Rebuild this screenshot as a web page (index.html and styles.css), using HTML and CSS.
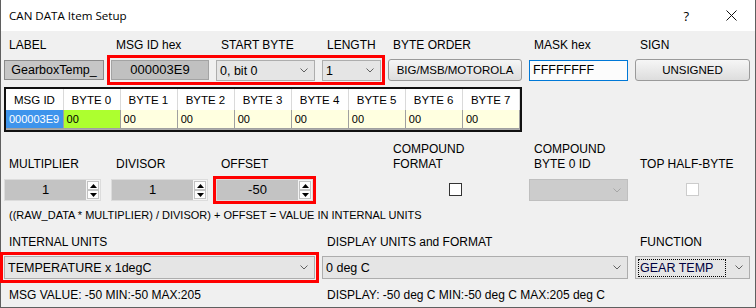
FILE: index.html
```html
<!DOCTYPE html>
<html lang="en">
<head>
  <meta charset="UTF-8">
  <meta name="viewport" content="width=device-width, initial-scale=1">
  <title>CAN DATA Item Setup</title>
  <link rel="stylesheet" href="styles.css">
</head>
<body>

<div class="dialog">
  <div class="titlebar">
    <span class="title">CAN DATA Item Setup</span>
    <span class="help">?</span>
    <svg class="close" width="11" height="11" viewBox="0 0 11 11"><path d="M.5 .5 10.5 10.5M10.5 .5 .5 10.5"/></svg>
  </div>

  <div class="form">
    <!-- row 1 -->
    <div class="cap">LABEL</div>
    <div class="cap">MSG ID hex</div>
    <div class="cap">START BYTE</div>
    <div class="cap">LENGTH</div>
    <div class="cap">BYTE ORDER</div>
    <div class="cap">MASK hex</div>
    <div class="cap">SIGN</div>

    <div class="field field-label">GearboxTemp_</div>
    <div class="group span-3 mark">
      <div class="field field-id">000003E9</div>
      <div class="combo combo-start">
        <span>0, bit 0</span>
        <svg class="chev" width="8" height="5" viewBox="0 0 8 5"><path d="M.5 .5 4 4 7.5 .5"/></svg>
      </div>
      <div class="combo combo-len">
        <span>1</span>
        <svg class="chev" width="8" height="5" viewBox="0 0 8 5"><path d="M.5 .5 4 4 7.5 .5"/></svg>
      </div>
    </div>
    <button class="btn">BIG/MSB/MOTOROLA</button>
    <div class="field field-mask">FFFFFFFF</div>
    <button class="btn">UNSIGNED</button>

    <!-- data bytes -->
    <div class="grid-view">
      <table>
        <tr>
          <th>MSG ID</th><th>BYTE 0</th><th>BYTE 1</th><th>BYTE 2</th><th>BYTE 3</th>
          <th>BYTE 4</th><th>BYTE 5</th><th>BYTE 6</th><th>BYTE 7</th>
        </tr>
        <tr>
          <td class="sel">000003E9</td><td class="hit">00</td><td>00</td><td>00</td><td>00</td>
          <td>00</td><td>00</td><td>00</td><td>00</td>
        </tr>
      </table>
    </div>

    <!-- row 2 -->
    <div class="cap cap-low">MULTIPLIER</div>
    <div class="cap cap-low">DIVISOR</div>
    <div class="cap cap-low">OFFSET</div>
    <div class="cap cap-low col-5">COMPOUND<br>FORMAT</div>
    <div class="cap cap-low">COMPOUND<br>BYTE 0 ID</div>
    <div class="cap cap-low">TOP HALF-BYTE</div>

    <div class="spin">
      <span class="spin-value">1</span>
      <span class="spin-buttons">
        <span><svg width="7" height="4" viewBox="0 0 7 4"><path d="M0 4 3.5 0 7 4z"/></svg></span>
        <span><svg width="7" height="4" viewBox="0 0 7 4"><path d="M0 0 3.5 4 7 0z"/></svg></span>
      </span>
    </div>
    <div class="spin">
      <span class="spin-value">1</span>
      <span class="spin-buttons">
        <span><svg width="7" height="4" viewBox="0 0 7 4"><path d="M0 4 3.5 0 7 4z"/></svg></span>
        <span><svg width="7" height="4" viewBox="0 0 7 4"><path d="M0 0 3.5 4 7 0z"/></svg></span>
      </span>
    </div>
    <div class="spin mark-tight">
      <span class="spin-value">-50</span>
      <span class="spin-buttons">
        <span><svg width="7" height="4" viewBox="0 0 7 4"><path d="M0 4 3.5 0 7 4z"/></svg></span>
        <span><svg width="7" height="4" viewBox="0 0 7 4"><path d="M0 0 3.5 4 7 0z"/></svg></span>
      </span>
    </div>
    <div class="check col-5"></div>
    <div class="combo disabled">
      <span></span>
      <svg class="chev" width="8" height="5" viewBox="0 0 8 5"><path d="M.5 .5 4 4 7.5 .5"/></svg>
    </div>
    <div class="check off"></div>

    <div class="note formula wide">((RAW_DATA * MULTIPLIER) / DIVISOR) + OFFSET = VALUE IN INTERNAL UNITS</div>

    <!-- row 3 -->
    <div class="cap cap-mid span-3">INTERNAL UNITS</div>
    <div class="cap cap-mid span-3">DISPLAY UNITS and FORMAT</div>
    <div class="cap cap-mid">FUNCTION</div>

    <div class="combo combo-wide span-3 mark">
      <span>TEMPERATURE x 1degC</span>
      <svg class="chev" width="8" height="5" viewBox="0 0 8 5"><path d="M.5 .5 4 4 7.5 .5"/></svg>
    </div>
    <div class="combo combo-wide span-3">
      <span>0 deg C</span>
      <svg class="chev" width="8" height="5" viewBox="0 0 8 5"><path d="M.5 .5 4 4 7.5 .5"/></svg>
    </div>
    <div class="combo combo-wide">
      <span class="focus">GEAR TEMP</span>
      <svg class="chev" width="8" height="5" viewBox="0 0 8 5"><path d="M.5 .5 4 4 7.5 .5"/></svg>
    </div>

    <div class="note span-3">MSG VALUE: -50 MIN:-50 MAX:205</div>
    <div class="note span-4">DISPLAY: -50 deg C MIN:-50 deg C MAX:205 deg C</div>
  </div>
</div>

</body>
</html>
```

FILE: styles.css
```css
*, *:after, *:before {
  box-sizing: border-box;
}
html, body {
  margin: 0;
  padding: 0;
}
body {
  background: #FFF;
  color: #000;
  font-family: "Liberation Sans", Arial, sans-serif;
  font-size: 12px;
}
.dialog {
  width: 756px;
  height: 308px;
  border: 1px solid #5F5F5F;
  border-top: 0;
  background: #F0F0F0;
}

/* title bar */
.titlebar {
  height: 31px;
  background: #FFF;
  display: flex;
  align-items: center;
  padding: 0 0 0 8px;
}
.title {
  font-family: "Open Sans", "Noto Sans", sans-serif;
  font-size: 11.6px;
  flex: 1;
}
.help {
  font-family: "Open Sans", "Noto Sans", sans-serif;
  font-size: 13px;
  margin-right: 37px;
}
.close {
  margin-right: 18px;
}
.close path {
  stroke: #111;
  stroke-width: 1;
  fill: none;
}

/* main layout */
.form {
  display: grid;
  grid-template-columns: 100px 98px 99px 59px 134px 99px 115px;
  grid-template-rows: 21px 23px 55px 42px 24px 26px 27px 28px 23px;
  column-gap: 7px;
  padding: 7px 3px 0;
}
.cap {
  padding-left: 5px;
  line-height: 14px;
  white-space: nowrap;
}
.cap-low {
  align-self: end;
  line-height: 15px;
  margin-bottom: 7px;
}
.cap-mid {
  margin-top: 6px;
}
.col-5 {
  grid-column-start: 5;
}
.span-3 {
  grid-column: span 3;
}
.span-4 {
  grid-column: span 4;
}
.wide {
  grid-column: 1 / -1;
}
.note {
  line-height: 14px;
  padding-left: 5px;
  margin-top: 4px;
  white-space: nowrap;
}
.formula {
  margin-top: 5px;
  font-size: 11px;
}

/* red highlight frames */
.mark {
  outline: 3px solid #F00;
  outline-offset: 1px;
}
.mark-tight {
  outline: 3px solid #F00;
}

/* inputs */
.field {
  height: 20px;
  margin-top: 1px;
  line-height: 18px;
  border: 1px solid #8A8A8A;
  background: #C6C6C6;
  text-align: center;
  white-space: nowrap;
}
.field-label {
  font-size: 12.5px;
}
.field-id {
  flex: none;
  width: 98px;
  border-color: #A3A3A3;
  background: #C0C0C0;
  font-size: 13px;
}
.field-mask {
  height: 21px;
  background: #FCFCFC;
  border-color: #0078D7;
  text-align: left;
  padding-left: 3px;
  font-size: 12.5px;
}
.group {
  display: flex;
  gap: 7px;
  height: 22px;
}
.combo {
  height: 22px;
  margin-top: 1px;
  display: flex;
  align-items: center;
  justify-content: space-between;
  background: #E5E5E5;
  border: 1px solid #ADADAD;
  padding: 0 6px 0 3px;
  font-size: 12.5px;
  white-space: nowrap;
}
.group .combo {
  height: 21px;
}
.combo-start {
  flex: none;
  width: 99px;
}
.combo-len {
  flex: none;
  width: 59px;
}
.combo-wide {
  margin-top: 0;
  height: 23px;
}
.combo.disabled {
  margin-top: 0;
  background: #CCCCCC;
  border-color: #BFBFBF;
}
.chev path {
  fill: none;
  stroke: #606060;
  stroke-width: 1;
}
.disabled .chev path {
  stroke: #A6A6A6;
}
.focus {
  border: 1px dotted #000;
  padding: 1px 12px 1px 1px;
  margin-left: -1px;
  color: #000040;
}
.btn {
  height: 22px;
  padding: 0;
  font-family: inherit;
  font-size: 11.5px;
  color: #000;
  border: 1px solid #9A9A9A;
  border-radius: 3px;
  background: linear-gradient(#F6F6F6, #DDDDDD);
  white-space: nowrap;
}

/* byte grid */
.grid-view {
  grid-column: 1 / -1;
  justify-self: start;
  width: 518px;
  height: 45px;
  margin-top: 5px;
  border: 2px solid #111;
  background: #ABABAB;
}
.grid-view table {
  width: 100%;
  border-collapse: collapse;
  table-layout: fixed;
  font-size: 11.5px;
}
.grid-view th {
  height: 21px;
  padding: 0 0 0 8px;
  background: #FFF;
  border-right: 1px solid #DADADA;
  font-weight: normal;
  text-align: left;
  white-space: nowrap;
}
.grid-view td {
  height: 18px;
  padding: 0 3px;
  background: #FFFFE0;
  border: 1px solid #A0A0A0;
  border-top: 0;
  font-size: 11px;
  white-space: nowrap;
}
.grid-view td.sel {
  background: #3E94EC;
  color: #FFF;
  border-left: 0;
}
.grid-view td.hit {
  background: #ADFF2F;
}

/* spinners */
.spin {
  width: 97px;
  height: 22px;
  display: flex;
  background: #C3C3C3;
  border: 1px solid #DCDCDC;
}
.spin-value {
  flex: 1;
  line-height: 20px;
  text-align: center;
  font-size: 13px;
}
.spin-buttons {
  width: 14px;
  display: flex;
  flex-direction: column;
  padding: 1px;
  background: #F4F4F4;
}
.spin-buttons span {
  flex: 1;
  display: flex;
  align-items: center;
  justify-content: center;
  background: #FDFDFD;
  border: 1px solid #C2C2C2;
}
.spin-buttons path {
  fill: #000;
}

/* checkboxes */
.check {
  justify-self: center;
  width: 13px;
  height: 13px;
  margin-top: 4px;
  border: 1px solid #333;
  background: #FFF;
}
.check.off {
  border-color: #CCCCCC;
}
```
